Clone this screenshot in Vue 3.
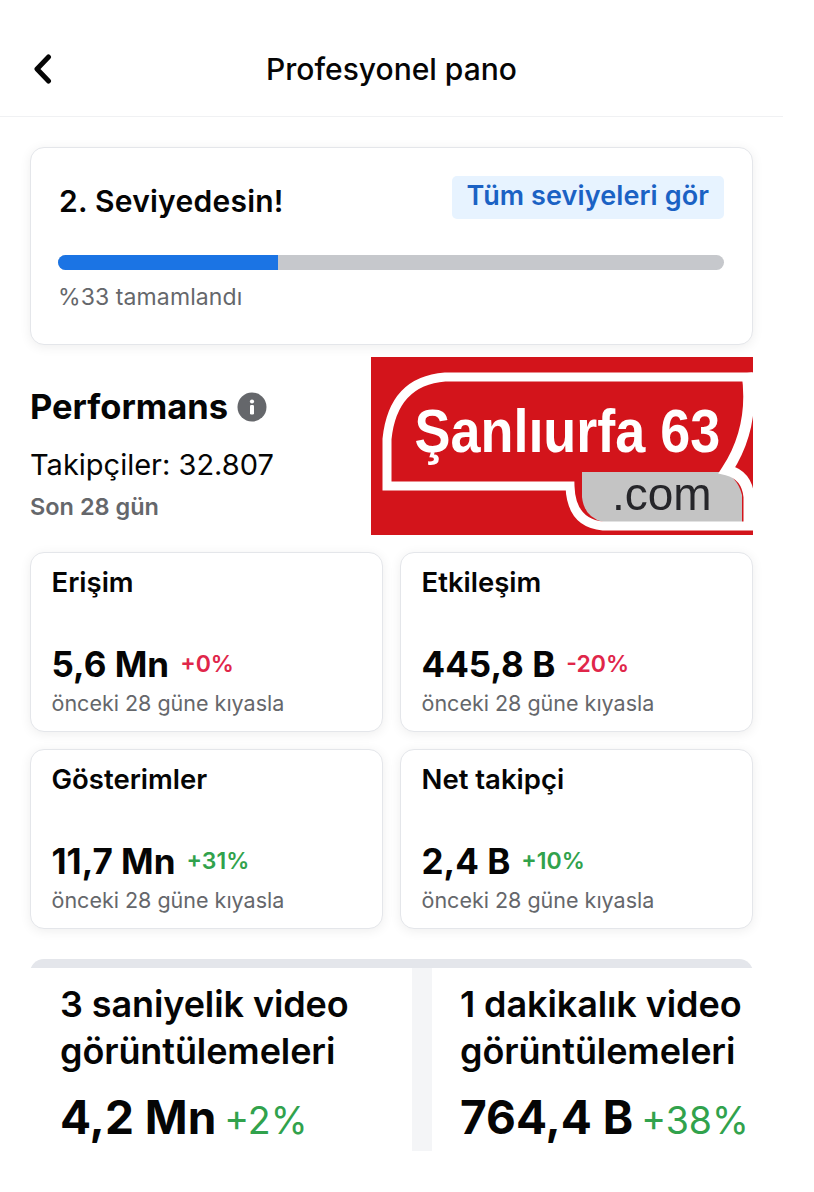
<script setup>
const stats = [
  { label: 'Erişim', value: '5,6 Mn', change: '+0%', tone: 'down' },
  { label: 'Etkileşim', value: '445,8 B', change: '-20%', tone: 'down' },
  { label: 'Gösterimler', value: '11,7 Mn', change: '+31%', tone: 'up' },
  { label: 'Net takipçi', value: '2,4 B', change: '+10%', tone: 'up' }
]

const videos = [
  { title: '3 saniyelik video görüntülemeleri', value: '4,2 Mn', change: '+2%' },
  { title: '1 dakikalık video görüntülemeleri', value: '764,4 B', change: '+38%' }
]
</script>

<template>
  <div class="page">
    <header class="topbar">
      <svg class="back" width="20" height="30" viewBox="0 0 20 30">
        <path d="M16.5 3 L5 15 L16.5 27" fill="none" stroke="#050505" stroke-width="5" stroke-linecap="round" stroke-linejoin="round" />
      </svg>
      <h1 class="title">Profesyonel pano</h1>
    </header>

    <main class="content">
      <section class="card level">
        <div class="level-head">
          <h2>2. Seviyedesin!</h2>
          <span class="all-levels">Tüm seviyeleri gör</span>
        </div>
        <div class="track"><div class="fill"></div></div>
        <p class="done">%33 tamamlandı</p>
      </section>

      <section class="perf">
        <div class="perf-info">
          <div class="perf-title">
            <h2>Performans</h2>
            <svg width="30" height="30" viewBox="0 0 30 30">
              <circle cx="15" cy="15" r="14.5" fill="#65676b" />
              <circle cx="15" cy="9.5" r="2.1" fill="#fff" />
              <rect x="13" y="13" width="4" height="9.5" rx="1.2" fill="#fff" />
            </svg>
          </div>
          <p class="followers">Takipçiler: 32.807</p>
          <p class="period">Son 28 gün</p>
        </div>
        <svg class="logo" width="382" height="178" viewBox="0 0 382 178">
          <rect width="382" height="178" fill="#d3141b" />
          <g class="logo-art">
            <path d="M211 115 H349 Q366 118 371 138 V165 H232 Q213 160 211 140 Z" fill="#c4c4c4" />
            <path d="M382 20 H74 Q22 24 16 82 V129 H199 Q200 166 232 169 H382" fill="none" stroke="#fff" stroke-width="9" />
            <path d="M376 16 Q384 70 356 113 Q376 118 378 140 V169" fill="none" stroke="#fff" stroke-width="11" />
            <text class="logo-name" transform="scale(0.87 1)" x="50" y="95">Şanlıurfa 63</text>
            <text class="logo-com" x="241" y="153">.com</text>
          </g>
        </svg>
      </section>

      <section class="stats">
        <article v-for="stat in stats" :key="stat.label" class="card stat">
          <h3>{{ stat.label }}</h3>
          <div class="stat-value">
            <strong>{{ stat.value }}</strong>
            <span :class="stat.tone">{{ stat.change }}</span>
          </div>
          <p>önceki 28 güne kıyasla</p>
        </article>
      </section>

      <section class="videos">
        <article v-for="video in videos" :key="video.title" class="video">
          <h3>{{ video.title }}</h3>
          <div class="video-value">
            <strong>{{ video.value }}</strong>
            <span>{{ video.change }}</span>
          </div>
        </article>
      </section>
    </main>
  </div>
</template>

<style>
body {
  background: #fff;
}
</style>

<style scoped>
.page {
  width: 814px;
  height: 1192px;
  overflow: hidden;
  background: #fff;
  color: #050505;
  font-family: Inter, "Liberation Sans", sans-serif;
}

h1, h2, h3, p {
  margin: 0;
}

.topbar {
  position: relative;
  width: 783px;
  height: 117px;
  box-sizing: border-box;
  border-bottom: 1px solid #f0f1f3;
  display: flex;
  align-items: flex-end;
  justify-content: center;
  padding-bottom: 27px;
}

.back {
  position: absolute;
  left: 32px;
  top: 54px;
}

.title {
  font-size: 30px;
  line-height: 40px;
  font-weight: 500;
}

.content {
  width: 723px;
  margin-left: 30px;
  padding-top: 30px;
}

.card {
  box-sizing: border-box;
  background: #fff;
  border: 1px solid #e4e6ea;
  border-radius: 14px;
  box-shadow: 0 2px 12px rgba(0, 0, 0, 0.07);
}

.level {
  height: 198px;
  padding: 28px 28px 0 27px;
}

.level-head {
  display: flex;
  justify-content: space-between;
  align-items: flex-start;
  height: 79px;
}

.level-head h2 {
  font-size: 30px;
  line-height: 50px;
  font-weight: 600;
  letter-spacing: 0.25px;
  margin-left: 1px;
}

.all-levels {
  background: #e7f3ff;
  color: #1b62c4;
  font-size: 27px;
  line-height: 40px;
  font-weight: 600;
  letter-spacing: 0.1px;
  padding: 0 15px 3px;
  border-radius: 5px;
}

.track {
  height: 15px;
  border-radius: 8px;
  overflow: hidden;
  background: #c6c8cc;
}

.fill {
  width: 33%;
  height: 100%;
  background: #1b74e4;
}

.done {
  margin-top: 11px;
  font-size: 23px;
  line-height: 32px;
  letter-spacing: 0.1px;
  color: #65676b;
}

.perf {
  display: flex;
  justify-content: space-between;
  margin-top: 12px;
  height: 178px;
}

.perf-title {
  display: flex;
  align-items: center;
  gap: 9px;
  margin-top: 28px;
}

.perf-title h2 {
  font-size: 34.5px;
  line-height: 44px;
  font-weight: 700;
}

.followers {
  margin-top: 16px;
  font-size: 29px;
  line-height: 40px;
}

.period {
  margin-top: 6px;
  font-size: 23.5px;
  line-height: 32px;
  font-weight: 600;
  color: #65676b;
}

.logo {
  display: block;
  flex: none;
}

.logo-art {
  filter: blur(0.5px);
}

.logo-name {
  font-family: "Liberation Sans", sans-serif;
  font-size: 62px;
  font-weight: 700;
  fill: #fff;
}

.logo-com {
  font-family: "Liberation Sans", sans-serif;
  font-size: 46px;
  fill: #26262a;
}

.stats {
  display: grid;
  grid-template-columns: 353px 353px;
  gap: 17px;
  margin-top: 17px;
}

.stat {
  height: 180px;
  padding: 11px 20.5px 0;
}

.stat h3 {
  font-size: 27.5px;
  line-height: 36px;
  font-weight: 600;
}

.stat-value {
  display: flex;
  align-items: center;
  gap: 11px;
  margin-top: 42px;
  height: 44px;
}

.stat-value strong {
  font-size: 35px;
  font-weight: 700;
}

.stat-value span {
  font-size: 23px;
  font-weight: 600;
}

.down {
  color: #e0264a;
}

.up {
  color: #31a24c;
}

.stat p {
  margin-top: 2px;
  font-size: 21.5px;
  line-height: 30px;
  color: #65676b;
}

.videos {
  display: grid;
  grid-template-columns: 382px 321px;
  column-gap: 20px;
  height: 192px;
  margin-top: 30px;
  box-sizing: border-box;
  background: #f4f5f7;
  border-top: 9px solid #e4e6eb;
  border-radius: 14px 14px 0 0;
}

.video {
  background: #fff;
  padding: 13px 0 0 30px;
}

.video + .video {
  padding-left: 28px;
}

.video h3 {
  font-size: 36px;
  line-height: 47px;
  font-weight: 600;
  letter-spacing: -0.1px;
}

.video-value {
  display: flex;
  align-items: baseline;
  gap: 8px;
  margin-top: 12px;
  white-space: nowrap;
}

.video-value strong {
  font-size: 46px;
  line-height: 60px;
  font-weight: 700;
}

.video-value span {
  font-size: 37.5px;
  color: #31a24c;
}
</style>
